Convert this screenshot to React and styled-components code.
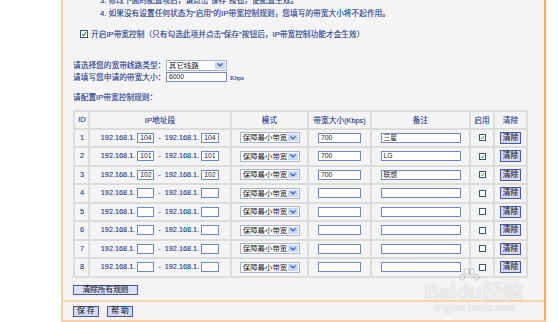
import React from "react";
import styled, { createGlobalStyle } from "styled-components";

const GlobalStyle = createGlobalStyle`
  html, body {
    margin: 0;
    padding: 0;
    background: #fff;
  }
  body {
    font-family: "Liberation Sans", "Noto Sans CJK SC", sans-serif;
  }
`;

const rules = [
  { id: 1, from: "104", to: "104", bw: "700", note: "三星", on: true },
  { id: 2, from: "101", to: "101", bw: "700", note: "LG", on: true },
  { id: 3, from: "102", to: "102", bw: "700", note: "联想", on: true },
  { id: 4 }, { id: 5 }, { id: 6 }, { id: 7 }, { id: 8 },
];

const cols = [15, 142, 77, 63, 99, 24, 33];

const Check = ({ checked, size = 7 }) => (
  <CheckBox $size={size}>
    {checked && (
      <svg width={size - 2} height={size - 2} viewBox="0 0 10 10">
        <path d="M2 5.2 L4.2 7.6 L8.2 2.4" fill="none" stroke="#1fa51f" strokeWidth="2" />
      </svg>
    )}
  </CheckBox>
);

const Select = ({ value, width }) => (
  <SelectBox $w={width}>
    <SelectText>{value}</SelectText>
    <SelectArrow>
      <svg width="6" height="4" viewBox="0 0 6 4">
        <path d="M0.5 0.5 L3 3 L5.5 0.5" fill="none" stroke="#3a5bb8" strokeWidth="1.2" />
      </svg>
    </SelectArrow>
  </SelectBox>
);

const App = () => (
  <>
    <GlobalStyle />
    <Panel>
      <Main>
        <Notes>
          <div>3. 修改下面的配置项后，请点击“保存”按钮，使配置生效。</div>
          <div>4. 如果没有设置任何状态为“启用”的IP带宽控制规则，您填写的带宽大小将不起作用。</div>
        </Notes>
        <EnableRow>
          <Check checked size={8} />
          <span>开启IP带宽控制（只有勾选此项并点击“保存”按钮后，IP带宽控制功能才会生效）</span>
        </EnableRow>
        <FormGrid>
          <Label>请选择您的宽带线路类型：</Label>
          <Select value="其它线路" width={61} />
          <span />
          <Label>请填写您申请的带宽大小：</Label>
          <TextBox $w={61} $h={10}>6000</TextBox>
          <Unit>Kbps</Unit>
        </FormGrid>
        <RulesLabel>请配置IP带宽控制规则：</RulesLabel>
        <RuleTable>
          <colgroup>
            {cols.map((w, i) => <Col key={i} $w={w} />)}
          </colgroup>
          <thead>
            <Row $h={18}>
              <Head $left>ID</Head>
              <Head>IP地址段</Head>
              <Head>模式</Head>
              <Head>带宽大小<Small>(Kbps)</Small></Head>
              <Head>备注</Head>
              <Head>启用</Head>
              <Head>清除</Head>
            </Row>
          </thead>
          <tbody>
            {rules.map(r => (
              <Row key={r.id} $h={18.5}>
                <Cell $left><Small>{r.id}</Small></Cell>
                <Cell>
                  <IpRange>
                    <Small>192.168.1.</Small>
                    <TextBox $w={17} $h={10}>{r.from}</TextBox>
                    <Dash>-</Dash>
                    <Small>192.168.1.</Small>
                    <TextBox $w={18} $h={10}>{r.to}</TextBox>
                  </IpRange>
                </Cell>
                <Cell><Select value="保障最小带宽" width={60} /></Cell>
                <Cell><TextBox $w={43} $h={10}>{r.bw}</TextBox></Cell>
                <Cell><TextBox $w={80} $h={10}>{r.note}</TextBox></Cell>
                <Cell><Check checked={r.on} /></Cell>
                <Cell><PlainButton $w={21} $h={12}>清除</PlainButton></Cell>
              </Row>
            ))}
          </tbody>
        </RuleTable>
        <ClearAll $w={65} $h={10}>清除所有规则</ClearAll>
      </Main>
      <Footer>
        <PlainButton $w={26} $h={11}>保 存</PlainButton>
        <PlainButton $w={26} $h={11}>帮 助</PlainButton>
      </Footer>
      <Watermark>
        <Brand>
          Bai
          <Paw>
            <svg width="22" height="24" viewBox="0 0 22 24">
              <g fill="none" stroke="rgba(150,150,150,0.45)" strokeWidth="1">
                <ellipse cx="4" cy="9" rx="2.6" ry="3.2" />
                <ellipse cx="8.5" cy="3.5" rx="2.6" ry="3.2" />
                <ellipse cx="14" cy="3.5" rx="2.6" ry="3.2" />
                <ellipse cx="18.5" cy="9" rx="2.6" ry="3.2" />
              </g>
            </svg>
            <PawText>du</PawText>
          </Paw>
          经验
        </Brand>
        <Site>jingyan.baidu.com</Site>
      </Watermark>
    </Panel>
  </>
);

export default App;

const Panel = styled.div`
  position: relative;
  box-sizing: border-box;
  width: 485px;
  margin: -6px 0 0 61px;
  background: #f4f4f4;
  border-left: 2px solid #fbcfa6;
  border-right: 2px solid #f6ab68;
  border-bottom: 2px solid #fbcfa6;
  color: #1a3889;
  font-size: 7.7px;
  -webkit-text-stroke: 0.1px #1a3889;
`;

const Main = styled.div`
  padding-left: 10px;
`;

const Small = styled.span`
  font-size: 7.3px;
`;

const Notes = styled.div`
  margin-left: 27px;
  line-height: 13px;
  white-space: nowrap;
`;

const EnableRow = styled.div`
  display: flex;
  align-items: center;
  gap: 3px;
  height: 13px;
  margin: 7px 0 0 7px;
  white-space: nowrap;
`;

const CheckBox = styled.span`
  box-sizing: border-box;
  display: inline-flex;
  align-items: center;
  justify-content: center;
  flex: none;
  width: ${p => p.$size}px;
  height: ${p => p.$size}px;
  background: #fff;
  border: 1px solid #35557f;
  vertical-align: middle;
`;

const FormGrid = styled.div`
  display: grid;
  grid-template-columns: 93px 61px auto;
  grid-auto-rows: 11px;
  row-gap: 1px;
  align-items: center;
  margin-top: 19.5px;
`;

const Label = styled.span`
  line-height: 11px;
  white-space: nowrap;
`;

const Unit = styled.span`
  margin-left: 3px;
  font-family: "Liberation Serif", serif;
  font-size: 6.5px;
`;

const SelectBox = styled.div`
  box-sizing: border-box;
  display: flex;
  align-items: stretch;
  width: ${p => p.$w}px;
  height: 11px;
  padding: 1px;
  background: #fff;
  border: 1px solid #a5b4cf;
  margin: 0 auto;
  -webkit-text-stroke: 0;
`;

const SelectText = styled.span`
  flex: 1;
  padding-left: 1px;
  color: #1a1a1a;
  font-size: 7.4px;
  line-height: 8px;
  white-space: nowrap;
  overflow: hidden;
`;

const SelectArrow = styled.span`
  display: flex;
  align-items: center;
  justify-content: center;
  width: 10px;
  background: #c9d7f6;
`;

const TextBox = styled.div`
  box-sizing: border-box;
  display: inline-block;
  width: ${p => p.$w}px;
  height: ${p => p.$h}px;
  padding-left: 2px;
  background: #fff;
  border: 1px solid #6f87c6;
  color: #1a1a1a;
  -webkit-text-stroke: 0;
  font-size: 6.8px;
  line-height: 8px;
  text-align: left;
  white-space: nowrap;
  vertical-align: middle;
`;

const RulesLabel = styled.div`
  margin-top: 8.5px;
  line-height: 13px;
`;

const RuleTable = styled.table`
  table-layout: fixed;
  width: 453px;
  margin-top: 5.5px;
  border-collapse: collapse;
  font-size: 7.7px;
`;

const Col = styled.col`
  width: ${p => p.$w}px;
`;

const Row = styled.tr`
  height: ${p => p.$h}px;
`;

const Head = styled.th`
  padding: 0;
  padding-left: ${p => (p.$left ? "3px" : "0")};
  border: 2px solid #dcdcd8;
  font-weight: normal;
  text-align: ${p => (p.$left ? "left" : "center")};
  white-space: nowrap;
`;

const Cell = styled.td`
  padding: 0;
  padding-left: ${p => (p.$left ? "5px" : "0")};
  border: 2px solid #dcdcd8;
  text-align: ${p => (p.$left ? "left" : "center")};
  vertical-align: middle;
  line-height: 10px;
`;

const IpRange = styled.div`
  display: flex;
  align-items: center;
  justify-content: center;
  gap: 2px;
  white-space: nowrap;
`;

const Dash = styled.span`
  margin: 0 2px;
  font-size: 7.3px;
`;

const PlainButton = styled.button`
  box-sizing: border-box;
  display: inline-flex;
  align-items: center;
  justify-content: center;
  width: ${p => p.$w}px;
  height: ${p => p.$h}px;
  padding: 0;
  background: #d6d9f6;
  border: 1px solid #4658b2;
  color: #1a1a1a;
  -webkit-text-stroke: 0.1px #1a1a1a;
  font-family: inherit;
  font-size: 7.7px;
  line-height: 1;
  white-space: pre;
  vertical-align: middle;
`;

const ClearAll = styled(PlainButton)`
  display: flex;
  margin-top: 7px;
  background: #dde0f9;
`;

const Footer = styled.div`
  display: flex;
  gap: 8px;
  margin-top: 5px;
  padding: 4px 0 3px 10px;
  border-top: 2px solid #fbd2ac;
`;

const Watermark = styled.div`
  position: absolute;
  left: 362px;
  top: 274px;
  display: flex;
  flex-direction: column;
  align-items: center;
  pointer-events: none;
  -webkit-text-stroke: 0;
`;

const Brand = styled.div`
  display: flex;
  align-items: flex-end;
  font-family: "Liberation Sans", "Noto Sans CJK SC", sans-serif;
  font-size: 20px;
  font-weight: bold;
  line-height: 20px;
  color: rgba(255, 255, 255, 0.75);
  text-shadow: 0 0 1px rgba(120, 120, 120, 0.5);
`;

const Paw = styled.span`
  position: relative;
  display: inline-flex;
  flex-direction: column;
  align-items: center;
  margin: 0 1px;
`;

const PawText = styled.span`
  margin-top: -10px;
`;

const Site = styled.div`
  font-family: "Liberation Sans", sans-serif;
  font-size: 10px;
  color: rgba(255, 255, 255, 0.8);
  text-shadow: 0 0 1px rgba(120, 120, 120, 0.5);
`;
